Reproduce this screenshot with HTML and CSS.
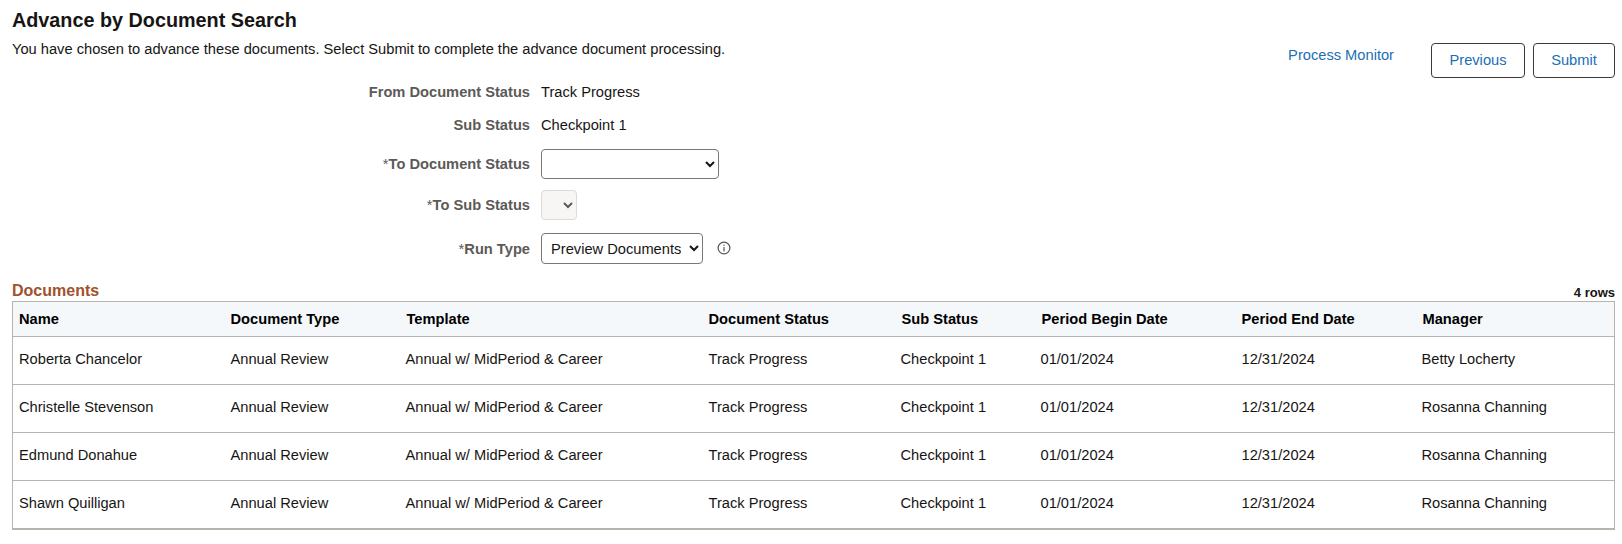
FILE: index.html
```html
<!DOCTYPE html>
<html lang="en">
<head>
    <meta charset="UTF-8">
    <meta name="viewport" content="width=device-width, initial-scale=1.0">
    <title>Advance by Document Search</title>
    <link rel="stylesheet" href="styles.css">
</head>
<body>
    <div class="page-head">
        <div class="page-intro">
            <h1 class="page-title">Advance by Document Search</h1>
            <p class="page-text">You have chosen to advance these documents. Select Submit to complete the advance document processing.</p>
        </div>
        <div class="page-actions">
            <a href="#" class="monitor-link">Process Monitor</a>
            <button type="button" class="action-button previous-button">Previous</button>
            <button type="button" class="action-button submit-button">Submit</button>
        </div>
    </div>

    <form class="advance-form">
        <div class="field field-text">
            <span class="field-label">From Document Status</span>
            <span>Track Progress</span>
        </div>
        <div class="field field-text">
            <span class="field-label">Sub Status</span>
            <span>Checkpoint 1</span>
        </div>
        <div class="field field-first-select">
            <label class="field-label" for="to-status"><span class="required">*</span>To Document Status</label>
            <select id="to-status" class="select-field status-select">
                <option value=""></option>
            </select>
        </div>
        <div class="field field-middle-select">
            <label class="field-label" for="to-sub"><span class="required">*</span>To Sub Status</label>
            <select id="to-sub" class="select-field sub-select" disabled>
                <option value=""></option>
            </select>
        </div>
        <div class="field">
            <label class="field-label" for="run-type"><span class="required">*</span>Run Type</label>
            <select id="run-type" class="select-field run-select">
                <option>Preview Documents</option>
            </select>
            <svg class="info-icon" width="14" height="14" viewBox="0 0 14 14" aria-hidden="true">
                <circle cx="7" cy="7" r="5.9" fill="none" stroke="#555" stroke-width="1.2"/>
                <rect x="6.4" y="6" width="1.2" height="4.4" fill="#555"/>
                <rect x="6.4" y="3.6" width="1.2" height="1.3" fill="#555"/>
            </svg>
        </div>
    </form>

    <div class="grid-head">
        <h2 class="grid-title">Documents</h2>
        <span class="grid-count">4 rows</span>
    </div>
    <table class="doc-table">
        <colgroup>
            <col class="col-name">
            <col class="col-type">
            <col class="col-template">
            <col class="col-status">
            <col class="col-sub">
            <col class="col-begin">
            <col class="col-end">
            <col>
        </colgroup>
        <thead>
            <tr>
                <th>Name</th>
                <th>Document Type</th>
                <th class="th-shift">Template</th>
                <th>Document Status</th>
                <th class="th-shift">Sub Status</th>
                <th class="th-shift">Period Begin Date</th>
                <th>Period End Date</th>
                <th class="th-shift">Manager</th>
            </tr>
        </thead>
        <tbody>
            <tr>
                <td>Roberta Chancelor</td>
                <td>Annual Review</td>
                <td>Annual w/ MidPeriod &amp; Career</td>
                <td>Track Progress</td>
                <td>Checkpoint 1</td>
                <td>01/01/2024</td>
                <td>12/31/2024</td>
                <td>Betty Locherty</td>
            </tr>
            <tr>
                <td>Christelle Stevenson</td>
                <td>Annual Review</td>
                <td>Annual w/ MidPeriod &amp; Career</td>
                <td>Track Progress</td>
                <td>Checkpoint 1</td>
                <td>01/01/2024</td>
                <td>12/31/2024</td>
                <td>Rosanna Channing</td>
            </tr>
            <tr>
                <td>Edmund Donahue</td>
                <td>Annual Review</td>
                <td>Annual w/ MidPeriod &amp; Career</td>
                <td>Track Progress</td>
                <td>Checkpoint 1</td>
                <td>01/01/2024</td>
                <td>12/31/2024</td>
                <td>Rosanna Channing</td>
            </tr>
            <tr>
                <td>Shawn Quilligan</td>
                <td>Annual Review</td>
                <td>Annual w/ MidPeriod &amp; Career</td>
                <td>Track Progress</td>
                <td>Checkpoint 1</td>
                <td>01/01/2024</td>
                <td>12/31/2024</td>
                <td>Rosanna Channing</td>
            </tr>
        </tbody>
    </table>
</body>
</html>
```

FILE: styles.css
```css
body {
    font-family: "Liberation Sans", Arial, sans-serif;
    font-size: 14.67px;
    color: #161513;
    background: #fff;
    margin: 0;
    padding: 0 7px 0 12px;
}
.page-head {
    display: flex;
    justify-content: space-between;
    height: 75px;
}
.page-title {
    font-size: 19.8px;
    line-height: 24px;
    font-weight: bold;
    margin: 8px 0 0;
}
.page-text {
    line-height: 16px;
    margin: 9px 0 0;
}
.page-actions {
    display: flex;
    align-items: flex-start;
    padding-top: 43px;
}
.monitor-link {
    color: #1a6fb5;
    text-decoration: none;
    line-height: 16px;
    margin: 4px 37px 0 0;
}
.action-button {
    height: 35px;
    font: inherit;
    color: #1a6fb5;
    background: #fff;
    border: 1px solid #3b3a38;
    border-radius: 4px;
    padding: 0 0 2px;
}
.previous-button {
    width: 94px;
    margin-right: 8px;
}
.submit-button {
    width: 82px;
}
.field {
    display: flex;
    align-items: center;
    gap: 11px;
}
.field-text {
    height: 33px;
}
.field-first-select {
    margin-top: 8px;
    margin-bottom: 11px;
}
.field-middle-select {
    margin-bottom: 13px;
}
.field-label {
    width: 518px;
    text-align: right;
    font-weight: bold;
    color: #5c5a58;
}
.required {
    font-weight: normal;
}
.select-field {
    font: inherit;
    color: #161513;
    background: #fff;
    border: 1px solid #7a7672;
    border-radius: 4px;
    height: 30px;
    padding: 0 5px;
}
.status-select {
    width: 178px;
}
.sub-select {
    width: 36px;
    background: #f5f3f2;
    border-color: #cfcbc7;
}
.run-select {
    width: 162px;
    height: 31px;
}
.info-icon {
    margin: 0 0 2px 3px;
    flex: none;
}
.grid-head {
    display: flex;
    justify-content: space-between;
    align-items: flex-end;
    height: 20px;
    margin-top: 17px;
}
.grid-title {
    font-size: 16px;
    line-height: 20px;
    font-weight: bold;
    color: #a0522d;
    margin: 0;
}
.grid-count {
    font-size: 13px;
    line-height: 16px;
    font-weight: bold;
}
.doc-table {
    width: 100%;
    table-layout: fixed;
    border-collapse: collapse;
    border: 1px solid #b9b3ad;
    border-bottom-width: 2px;
}
.col-name { width: 212px; }
.col-type { width: 175px; }
.col-template { width: 303px; }
.col-status { width: 192px; }
.col-sub { width: 140px; }
.col-begin { width: 201px; }
.col-end { width: 180px; }
.doc-table th {
    height: 34px;
    background: #f5f8fa;
    text-align: left;
    padding: 0 6px;
    color: #000;
    border-bottom: 1px solid #b9b3ad;
}
.doc-table .th-shift {
    padding-left: 7px;
}
.doc-table td {
    height: 43px;
    padding: 0 6px 4px;
    border-bottom: 1px solid #b9b3ad;
}
```
